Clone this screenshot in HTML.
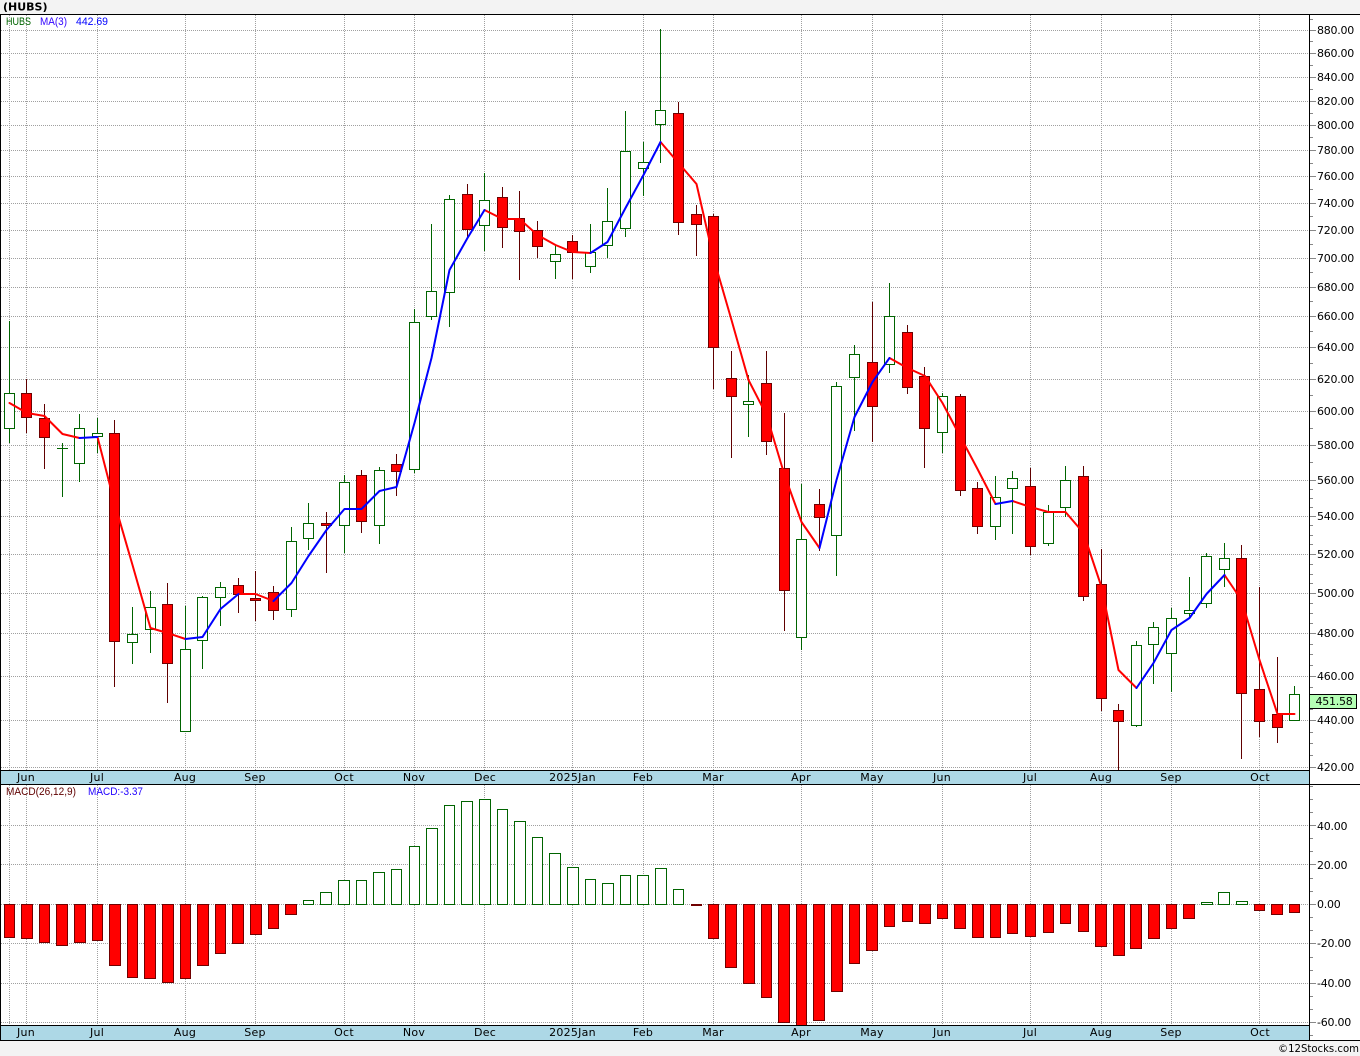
<!DOCTYPE html>
<html><head><meta charset="utf-8"><title>HUBS</title>
<style>
html,body{margin:0;padding:0;background:#f3f3f3;width:1360px;height:1056px;overflow:hidden}
svg{display:block}
text{font-family:"DejaVu Sans","Liberation Sans",sans-serif;font-size:11px;letter-spacing:-.25px;fill:#000}
.m{font-size:11px;text-anchor:middle;letter-spacing:.25px}
.l{font-family:"Liberation Sans",sans-serif;font-size:11px;letter-spacing:0}
.c{shape-rendering:crispEdges}
</style></head><body>
<svg width="1360" height="1056" viewBox="0 0 1360 1056" xmlns="http://www.w3.org/2000/svg">
<rect x="0" y="14" width="1360" height="1027" fill="#fff"/>
<!-- grid -->
<path class="c" fill="none" stroke="#a0a0a0" stroke-width="1" stroke-dasharray="1 1" d="M1 30.5H1309M1 53.5H1309M1 77.5H1309M1 101.5H1309M1 125.5H1309M1 150.5H1309M1 176.5H1309M1 203.5H1309M1 230.5H1309M1 258.5H1309M1 287.5H1309M1 316.5H1309M1 347.5H1309M1 379.5H1309M1 411.5H1309M1 445.5H1309M1 480.5H1309M1 516.5H1309M1 554.5H1309M1 593.5H1309M1 633.5H1309M1 676.5H1309M1 720.5H1309M1 767.5H1309M1 825.5H1309M1 864.5H1309M1 904.5H1309M1 943.5H1309M1 983.5H1309M1 1022.5H1309M9.5 15V771M26.5 15V771M97.5 15V771M185.5 15V771M255.5 15V771M344.5 15V771M414.5 15V771M484.5 15V771M572.5 15V771M643.5 15V771M713.5 15V771M801.5 15V771M872.5 15V771M942.5 15V771M1030.5 15V771M1101.5 15V771M1171.5 15V771M1259.5 15V771M9.5 785V1026M26.5 785V1026M97.5 785V1026M185.5 785V1026M255.5 785V1026M344.5 785V1026M414.5 785V1026M484.5 785V1026M572.5 785V1026M643.5 785V1026M713.5 785V1026M801.5 785V1026M872.5 785V1026M942.5 785V1026M1030.5 785V1026M1101.5 785V1026M1171.5 785V1026M1259.5 785V1026"/>
<!-- green wicks -->
<path class="c" fill="none" stroke="#006400" d="M9.5 321V443M62.5 443V497M79.5 414V482M97.5 418V453M132.5 607V664M150.5 591V653M185.5 606V731M202.5 596V669M220.5 582V626M291.5 527V617M308.5 503V550M344.5 475V553M379.5 467V544M414.5 309V473M431.5 224V320M449.5 195V327M484.5 173V251M555.5 245V279M590.5 224V273M607.5 188V258M625.5 111V237M643.5 142V196M660.5 29V163M748.5 375V437M801.5 484V650M836.5 382V576M854.5 345V431M889.5 283V373M942.5 393V453M995.5 476V540M1012.5 471V534M1048.5 505V546M1065.5 466V517M1136.5 641V727M1153.5 622V684M1171.5 608V692M1189.5 577V618M1206.5 553V608M1224.5 543V587M1294.5 686V721M57 448.5H68"/>
<!-- green bodies -->
<path class="c" fill="#fff" stroke="#006400" d="M4.5 393.5h10v35h-10zM74.5 428.5h10v35h-10zM92.5 433.5h10v3h-10zM127.5 634.5h10v8h-10zM145.5 607.5h10v22h-10zM180.5 649.5h10v82h-10zM197.5 597.5h10v43h-10zM215.5 587.5h10v10h-10zM286.5 541.5h10v68h-10zM303.5 523.5h10v15h-10zM339.5 482.5h10v43h-10zM374.5 470.5h10v55h-10zM409.5 322.5h10v147h-10zM426.5 291.5h10v25h-10zM444.5 199.5h10v93h-10zM479.5 200.5h10v25h-10zM550.5 254.5h10v7h-10zM585.5 252.5h10v14h-10zM602.5 221.5h10v24h-10zM620.5 151.5h10v77h-10zM638.5 162.5h10v6h-10zM655.5 110.5h10v14h-10zM743.5 401.5h10v3h-10zM796.5 539.5h10v98h-10zM831.5 386.5h10v149h-10zM849.5 354.5h10v23h-10zM884.5 316.5h10v48h-10zM937.5 396.5h10v36h-10zM990.5 497.5h10v29h-10zM1007.5 478.5h10v10h-10zM1043.5 512.5h10v31h-10zM1060.5 480.5h10v27h-10zM1131.5 645.5h10v80h-10zM1148.5 627.5h10v17h-10zM1166.5 618.5h10v35h-10zM1184.5 610.5h10v3h-10zM1201.5 556.5h10v47h-10zM1219.5 558.5h10v11h-10zM1289.5 694.5h10v26h-10z"/>
<!-- red wicks -->
<path class="c" fill="none" stroke="#600000" d="M26.5 379V433M44.5 404V469M114.5 420V687M167.5 583V703M238.5 578V613M255.5 571V621M273.5 586V620M326.5 512V573M361.5 470V533M396.5 454V496M467.5 184V238M502.5 187V248M519.5 191V280M537.5 221V258M572.5 235V279M678.5 102V235M696.5 205V256M713.5 214V389M731.5 351V458M766.5 351V455M784.5 413V631M819.5 489V551M872.5 302V442M907.5 325V394M924.5 367V468M960.5 394V496M977.5 482V534M1030.5 468V555M1083.5 466V601M1101.5 549V711M1118.5 704V770M1241.5 545V759M1259.5 587V737M1277.5 657V743"/>
<!-- red bodies -->
<path class="c" fill="#f00" stroke="#700000" d="M21.5 393.5h10v24h-10zM39.5 418.5h10v19h-10zM109.5 433.5h10v208h-10zM162.5 604.5h10v59h-10zM233.5 585.5h10v9h-10zM250.5 598.5h10v2h-10zM268.5 592.5h10v18h-10zM321.5 523.5h10v2h-10zM356.5 475.5h10v46h-10zM391.5 464.5h10v7h-10zM462.5 194.5h10v35h-10zM497.5 197.5h10v30h-10zM514.5 218.5h10v13h-10zM532.5 230.5h10v16h-10zM567.5 241.5h10v11h-10zM673.5 113.5h10v109h-10zM691.5 214.5h10v10h-10zM708.5 216.5h10v131h-10zM726.5 378.5h10v18h-10zM761.5 383.5h10v58h-10zM779.5 468.5h10v122h-10zM814.5 504.5h10v13h-10zM867.5 362.5h10v44h-10zM902.5 332.5h10v55h-10zM919.5 376.5h10v52h-10zM955.5 396.5h10v94h-10zM972.5 488.5h10v38h-10zM1025.5 486.5h10v60h-10zM1078.5 476.5h10v120h-10zM1096.5 584.5h10v114h-10zM1113.5 710.5h10v11h-10zM1236.5 558.5h10v135h-10zM1254.5 689.5h10v32h-10zM1272.5 714.5h10v13h-10z"/>
<!-- MA -->
<g fill="none" stroke-width="2" stroke-linejoin="round" stroke-linecap="round">
<path stroke="#f00" d="M9.5 403L27 413 44.5 416 62.5 434 79.5 438M97.5 437L114.5 503 132.5 565 150.5 628 167.5 633 185.5 639M238.5 594L255.5 594 273.5 601M484.5 210L502.5 219 519.5 219 537.5 235 555.5 245 572.5 252 590.5 253M660.5 142L678.5 163 696.5 184 713.5 258 731.5 320 748.5 380 766.5 415 784.5 475 801.5 522 819.5 548M889.5 358L907.5 368 925 376 942.5 403 960.5 437 977.5 469 995.5 504M1012.5 501L1030.5 507 1048.5 512 1065.5 512 1083.5 533 1101.5 587 1118.5 670 1136.5 688M1224.5 575L1241.5 600 1259.5 660 1277.5 714 1294.5 714"/>
<path stroke="#00f" d="M79.5 438L97.5 437M185.5 639L202.5 637 220.5 609 238.5 594M273.5 601L291.5 583 308.5 556 326.5 530 344.5 509 361.5 509 379.5 491 396.5 487 414.5 423 431.5 358 449.5 270 467.5 238 484.5 210M590.5 253L607.5 242 625.5 208 643.5 175 660.5 142M819.5 548L836.5 480 854.5 417 872.5 382 889.5 358M995.5 504L1012.5 501M1136.5 688L1153.5 663 1171.5 630 1189.5 618 1206.5 594 1224.5 575"/>
</g>
<!-- MACD red -->
<path class="c" fill="#f00" stroke="#700000" d="M4.5 904.5h10v33h-10zM21.5 904.5h11v34h-11zM39.5 904.5h10v38h-10zM56.5 904.5h11v41h-11zM74.5 904.5h11v38h-11zM92.5 904.5h10v36h-10zM109.5 904.5h11v61h-11zM127.5 904.5h10v73h-10zM144.5 904.5h11v74h-11zM162.5 904.5h11v78h-11zM180.5 904.5h10v74h-10zM197.5 904.5h11v61h-11zM215.5 904.5h10v49h-10zM232.5 904.5h11v39h-11zM250.5 904.5h11v30h-11zM268.5 904.5h10v24h-10zM285.5 904.5h11v10h-11zM691.5 904.5h10v1h-10zM708.5 904.5h10v34h-10zM725.5 904.5h11v63h-11zM743.5 904.5h11v79h-11zM761.5 904.5h10v93h-10zM778.5 904.5h11v118h-11zM796.5 904.5h10v121h-10zM813.5 904.5h11v116h-11zM831.5 904.5h11v87h-11zM849.5 904.5h10v59h-10zM866.5 904.5h11v46h-11zM884.5 904.5h10v22h-10zM902.5 904.5h10v17h-10zM919.5 904.5h11v19h-11zM937.5 904.5h10v14h-10zM954.5 904.5h11v24h-11zM972.5 904.5h11v33h-11zM990.5 904.5h10v33h-10zM1007.5 904.5h10v29h-10zM1025.5 904.5h10v32h-10zM1043.5 904.5h10v28h-10zM1060.5 904.5h10v19h-10zM1078.5 904.5h10v27h-10zM1095.5 904.5h11v42h-11zM1113.5 904.5h11v51h-11zM1130.5 904.5h11v44h-11zM1148.5 904.5h11v34h-11zM1166.5 904.5h10v24h-10zM1183.5 904.5h11v14h-11zM1254.5 904.5h10v6h-10zM1271.5 904.5h11v10h-11zM1289.5 904.5h10v8h-10z"/>
<!-- MACD green -->
<path class="c" fill="#fff" stroke="#006400" d="M303.5 900.5h10v4h-10zM320.5 892.5h11v12h-11zM338.5 880.5h11v24h-11zM356.5 880.5h10v24h-10zM373.5 872.5h11v32h-11zM391.5 869.5h10v35h-10zM409.5 846.5h10v58h-10zM426.5 828.5h11v76h-11zM444.5 805.5h10v99h-10zM461.5 801.5h11v103h-11zM479.5 799.5h11v105h-11zM497.5 809.5h10v95h-10zM514.5 821.5h11v83h-11zM532.5 837.5h10v67h-10zM549.5 853.5h11v51h-11zM567.5 867.5h11v37h-11zM585.5 879.5h10v25h-10zM602.5 883.5h11v21h-11zM620.5 875.5h10v29h-10zM637.5 875.5h11v29h-11zM655.5 868.5h11v36h-11zM673.5 889.5h10v15h-10zM1201.5 902.5h11v2h-11zM1218.5 892.5h11v12h-11zM1236.5 901.5h11v3h-11z"/>
<!-- bands and frame -->
<rect x="1" y="771" width="1308" height="13" fill="#add8e6"/>
<rect x="1" y="1026" width="1308" height="14" fill="#add8e6"/>
<path class="c" fill="none" stroke="#000" d="M0 14.5H1360M0 770.5H1309M0 784.5H1360M0 1025.5H1309M0 1040.5H1360M.5 14V1041M1309.5 14V1041"/>
<!-- axis ticks -->
<path class="c" fill="none" stroke="#888" d="M1310 30.5h6M1310 53.5h6M1310 77.5h6M1310 101.5h6M1310 125.5h6M1310 150.5h6M1310 176.5h6M1310 203.5h6M1310 230.5h6M1310 258.5h6M1310 287.5h6M1310 316.5h6M1310 347.5h6M1310 379.5h6M1310 411.5h6M1310 445.5h6M1310 480.5h6M1310 516.5h6M1310 554.5h6M1310 593.5h6M1310 633.5h6M1310 676.5h6M1310 720.5h6M1310 767.5h6M1310 19.5h3M1310 41.5h3M1310 65.5h3M1310 89.5h3M1310 113.5h3M1310 137.5h3M1310 163.5h3M1310 189.5h3M1310 216.5h3M1310 244.5h3M1310 272.5h3M1310 301.5h3M1310 331.5h3M1310 363.5h3M1310 395.5h3M1310 428.5h3M1310 462.5h3M1310 489.5h3M1310 498.5h3M1310 507.5h3M1310 525.5h3M1310 535.5h3M1310 544.5h3M1310 564.5h3M1310 574.5h3M1310 583.5h3M1310 603.5h3M1310 613.5h3M1310 623.5h3M1310 644.5h3M1310 654.5h3M1310 665.5h3M1310 687.5h3M1310 698.5h3M1310 709.5h3M1310 732.5h3M1310 743.5h3M1310 755.5h3M1310 825.5h6M1310 864.5h6M1310 904.5h6M1310 943.5h6M1310 983.5h6M1310 1022.5h6M1310 786.5h3M1310 799.5h3M1310 812.5h3M1310 838.5h3M1310 851.5h3M1310 878.5h3M1310 891.5h3M1310 917.5h3M1310 930.5h3M1310 957.5h3M1310 970.5h3M1310 996.5h3M1310 1009.5h3M1310 1035.5h3"/>
<!-- Y labels -->
<g>
<text x="1317" y="34">880.00</text><text x="1317" y="57">860.00</text><text x="1317" y="81">840.00</text><text x="1317" y="105">820.00</text><text x="1317" y="129">800.00</text><text x="1317" y="154">780.00</text><text x="1317" y="180">760.00</text><text x="1317" y="207">740.00</text><text x="1317" y="234">720.00</text><text x="1317" y="262">700.00</text><text x="1317" y="291">680.00</text><text x="1317" y="320">660.00</text><text x="1317" y="351">640.00</text><text x="1317" y="383">620.00</text><text x="1317" y="415">600.00</text><text x="1317" y="449">580.00</text><text x="1317" y="484">560.00</text><text x="1317" y="520">540.00</text><text x="1317" y="558">520.00</text><text x="1317" y="597">500.00</text><text x="1317" y="637">480.00</text><text x="1317" y="680">460.00</text><text x="1317" y="724">440.00</text><text x="1317" y="771">420.00</text>
<text x="1317" y="830">40.00</text><text x="1317" y="869">20.00</text><text x="1317" y="908">0.00</text><text x="1317" y="947">-20.00</text><text x="1317" y="987">-40.00</text><text x="1317" y="1026">-60.00</text>
</g>
<rect class="c" x="1309.5" y="694.5" width="47" height="14" fill="#b4ffb4" stroke="#000"/>
<text x="1315.5" y="705">451.58</text>
<!-- month labels -->
<g>
<text class="m" x="26" y="781">Jun</text><text class="m" x="97" y="781">Jul</text><text class="m" x="185" y="781">Aug</text><text class="m" x="255" y="781">Sep</text><text class="m" x="344" y="781">Oct</text><text class="m" x="414" y="781">Nov</text><text class="m" x="485" y="781">Dec</text><text class="m" x="572.5" y="781">2025Jan</text><text class="m" x="643" y="781">Feb</text><text class="m" x="713" y="781">Mar</text><text class="m" x="801" y="781">Apr</text><text class="m" x="872" y="781">May</text><text class="m" x="942" y="781">Jun</text><text class="m" x="1030" y="781">Jul</text><text class="m" x="1101" y="781">Aug</text><text class="m" x="1171" y="781">Sep</text><text class="m" x="1260" y="781">Oct</text>
<text class="m" x="26" y="1036">Jun</text><text class="m" x="97" y="1036">Jul</text><text class="m" x="185" y="1036">Aug</text><text class="m" x="255" y="1036">Sep</text><text class="m" x="344" y="1036">Oct</text><text class="m" x="414" y="1036">Nov</text><text class="m" x="485" y="1036">Dec</text><text class="m" x="572.5" y="1036">2025Jan</text><text class="m" x="643" y="1036">Feb</text><text class="m" x="713" y="1036">Mar</text><text class="m" x="801" y="1036">Apr</text><text class="m" x="872" y="1036">May</text><text class="m" x="942" y="1036">Jun</text><text class="m" x="1030" y="1036">Jul</text><text class="m" x="1101" y="1036">Aug</text><text class="m" x="1171" y="1036">Sep</text><text class="m" x="1260" y="1036">Oct</text>
</g>
<!-- legends -->
<text x="3" y="10.5" style="font-weight:bold;font-size:11px;letter-spacing:0">(HUBS)</text>
<text class="l" x="6" y="25" textLength="25" lengthAdjust="spacingAndGlyphs" style="fill:#006400">HUBS</text>
<text class="l" x="40" y="25" textLength="27" lengthAdjust="spacingAndGlyphs" style="fill:#3000ff">MA(3)</text>
<text class="l" x="76" y="25" textLength="32" lengthAdjust="spacingAndGlyphs" style="fill:#00f">442.69</text>
<text class="l" x="6" y="795" textLength="70" lengthAdjust="spacingAndGlyphs" style="fill:#600000">MACD(26,12,9)</text>
<text class="l" x="88" y="795" textLength="55" lengthAdjust="spacingAndGlyphs" style="fill:#2000ff">MACD:-3.37</text>
<text x="1278" y="1052" textLength="81" lengthAdjust="spacingAndGlyphs" style="font-size:11px;letter-spacing:0">©12Stocks.com</text>
</svg>
</body></html>
